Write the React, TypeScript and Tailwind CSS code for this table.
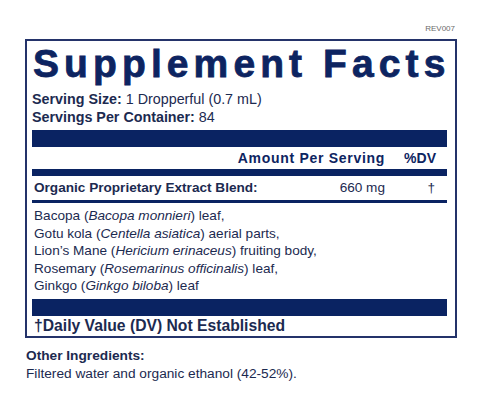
const navy = "bg-[#0a2362]";

const Ingredient = ({ name, latin, part }: { name: string; latin: string; part: string }) => (
  <p>
    {name} (<i>{latin}</i>) {part}
  </p>
);

export default function App() {
  return (
    <div className="w-[492px] h-[407px] bg-white font-['Liberation_Sans',Arial,sans-serif] text-[#1c2a50]">
      <div className="h-[39px] pt-[24px] pr-[37px] text-right text-[8px] leading-[10px] text-[#6b6b6b]">REV007</div>

      <div className="ml-[25px] w-[432px] border-2 border-[#24336a] pl-[5px] pr-[8px]">
        <h1 className="mt-[3px] pl-[1px] whitespace-nowrap text-[39px] leading-[39px] font-bold tracking-[5.1px] text-[#0d2461] [-webkit-text-stroke:0.8px_#0d2461]">Supplement Facts</h1>
        <div className="mt-[7px] text-[14.3px] leading-[18px]">
          <p><b>Serving Size:</b> 1 Dropperful (0.7 mL)</p>
          <p><b>Servings Per Container:</b> 84</p>
        </div>

        <div className={`mt-[4px] h-[17px] ${navy}`} />
        <div className="flex h-[22px] items-center text-[14px] font-bold text-[#0d2461]">
          <span className="flex-1 text-right tracking-[0.7px]">Amount Per Serving</span>
          <span className="w-[62px] pr-[11px] text-right">%DV</span>
        </div>
        <div className={`h-[7px] ${navy}`} />

        <div className="flex h-[24px] items-center pl-[2px] text-[13.6px]">
          <span className="flex-1 font-bold">Organic Proprietary Extract Blend:</span>
          <span>660 mg</span>
          <span className="w-[62px] pr-[12px] text-right">†</span>
        </div>
        <div className={`h-[3px] ${navy}`} />

        <div className="pt-[4px] pl-[2px] text-[13.6px] leading-[17.5px]">
          <Ingredient name="Bacopa" latin="Bacopa monnieri" part="leaf," />
          <Ingredient name="Gotu kola" latin="Centella asiatica" part="aerial parts," />
          <Ingredient name="Lion’s Mane" latin="Hericium erinaceus" part="fruiting body," />
          <Ingredient name="Rosemary" latin="Rosemarinus officinalis" part="leaf," />
          <Ingredient name="Ginkgo" latin="Ginkgo biloba" part="leaf" />
        </div>

        <div className={`mt-[4px] h-[17px] ${navy}`} />
        <p className="pl-[2px] text-[15.7px] leading-[20px] font-bold">†Daily Value (DV) Not Established</p>
      </div>

      <div className="mt-[9px] ml-[26px] text-[13.7px] leading-[18px]">
        <p className="font-bold">Other Ingredients:</p>
        <p>Filtered water and organic ethanol (42-52%).</p>
      </div>
    </div>
  );
}
